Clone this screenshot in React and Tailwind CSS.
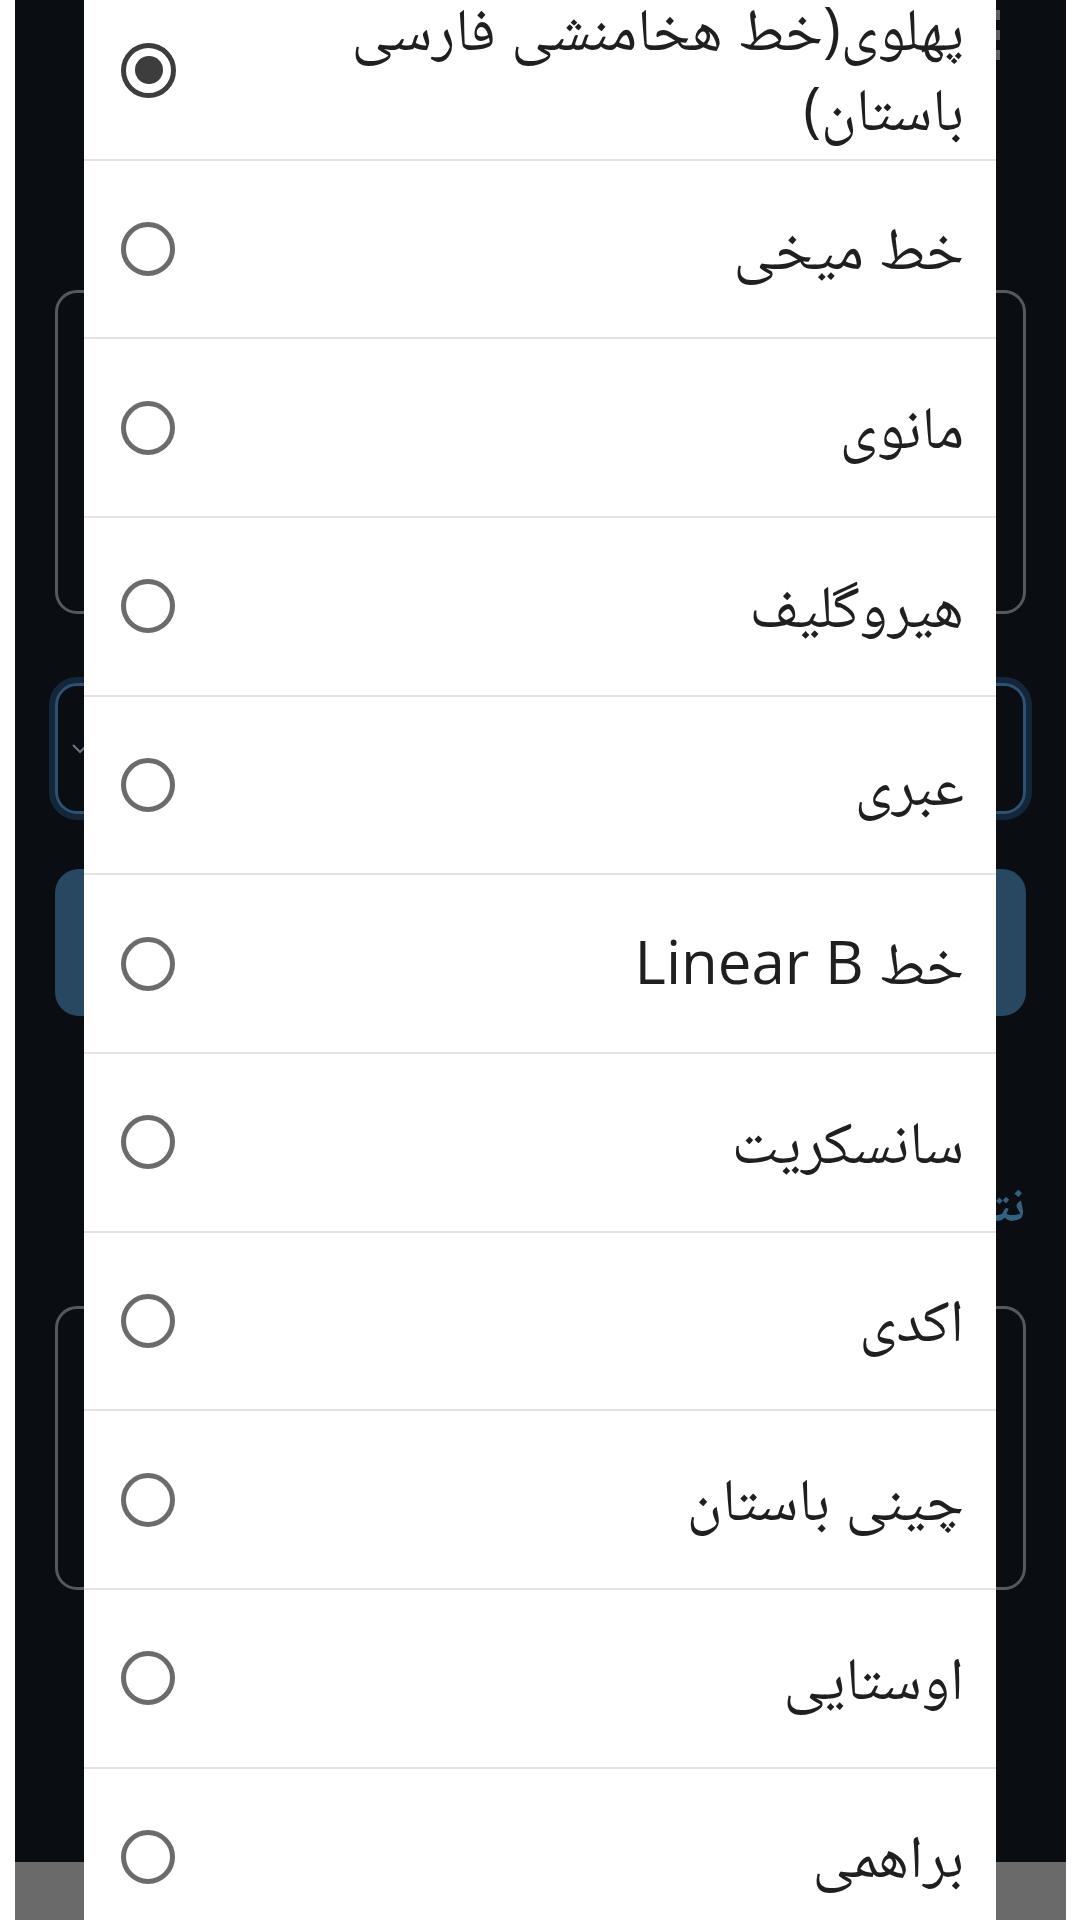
import React from 'react'

const items = [
  { label: ['پهلوی(خط هخامنشی فارسی', 'باستان)'], checked: true },
  { label: ['خط میخی'] },
  { label: ['مانوی'] },
  { label: ['هیروگلیف'] },
  { label: ['عبری'] },
  { label: ['خط Linear B'] },
  { label: ['سانسکریت'] },
  { label: ['اکدی'] },
  { label: ['چینی باستان'] },
  { label: ['اوستایی'] },
  { label: ['براهمی'] },
]

function Radio({ checked }) {
  if (checked) {
    return (
      <div className="w-[55px] h-[55px] shrink-0 rounded-full border-[5px] border-[#3d3d3d] flex items-center justify-center">
        <div className="w-[28px] h-[28px] rounded-full bg-[#3d3d3d]" />
      </div>
    )
  }
  return <div className="w-[54px] h-[54px] shrink-0 rounded-full border-[5px] border-[#6b6b6b]" />
}

function Row({ item, first }) {
  return (
    <div
      className={
        'flex items-center h-[178.67px] border-b-2 border-[#e3e3e3] pl-[37px] pr-[32px] ' +
        (first ? '-mt-[18px]' : '')
      }
    >
      <Radio checked={item.checked} />
      <div
        dir="rtl"
        className={
          'flex-1 text-right text-[60px] leading-[80px] text-[#1f1f1f] ' +
          (item.label.length > 1 ? '-mt-[6px]' : '-mt-[5px]')
        }
      >
        {item.label.map((l, i) => (
          <div key={i}>{l}</div>
        ))}
      </div>
    </div>
  )
}

export default function App() {
  return (
    <div className="relative w-[1080px] h-[1920px] overflow-hidden bg-white font-['Open_Sans','Noto_Naskh_Arabic','DejaVu_Sans',sans-serif]">
      {/* page behind the dialog */}
      <div className="ml-[15px] mr-[14px] h-[1920px] bg-[#0a0d12] flex flex-col">
        <div className="flex justify-end pr-[66px] pt-[10px] h-[290px]">
          <div className="flex flex-col gap-[10px]">
            <div className="w-[5px] h-[10px] bg-[#5a5d62]" />
            <div className="w-[5px] h-[10px] bg-[#5a5d62]" />
            <div className="w-[5px] h-[10px] bg-[#5a5d62]" />
          </div>
        </div>
        <div className="mx-[40px] h-[324px] rounded-[22px] border-[3px] border-[#55595e]" />
        <div className="mx-[34px] mt-[63px] h-[143px] rounded-[28px] border-[6px] border-[#13263a]">
          <div className="h-full rounded-[22px] border-[3px] border-[#2d5173] flex items-center pl-[14px]">
            <svg width="16" height="10" viewBox="0 0 16 10" fill="none">
              <path d="M1 1l7 7 7-7" stroke="#6d7780" strokeWidth="2" />
            </svg>
          </div>
        </div>
        <div className="mx-[40px] mt-[49px] h-[147px] rounded-[24px] bg-[#284862]" />
        <div dir="rtl" className="mt-[158px] pr-[41px] h-[56px] text-[50px] leading-[56px] font-bold text-[#33607f] text-right">
          نتیجه تبدیل
        </div>
        <div className="mx-[40px] mt-[76px] h-[284px] rounded-[22px] border-[3px] border-[#55595e]" />
        <div className="flex-1" />
        <div className="h-[58px] bg-[#6a6a6a]" />
      </div>

      {/* single choice dialog */}
      <div className="absolute top-0 left-[84px] w-[912px] h-[2000px] bg-white">
        {items.map((item, i) => (
          <Row key={i} item={item} first={i === 0} />
        ))}
      </div>
    </div>
  )
}
